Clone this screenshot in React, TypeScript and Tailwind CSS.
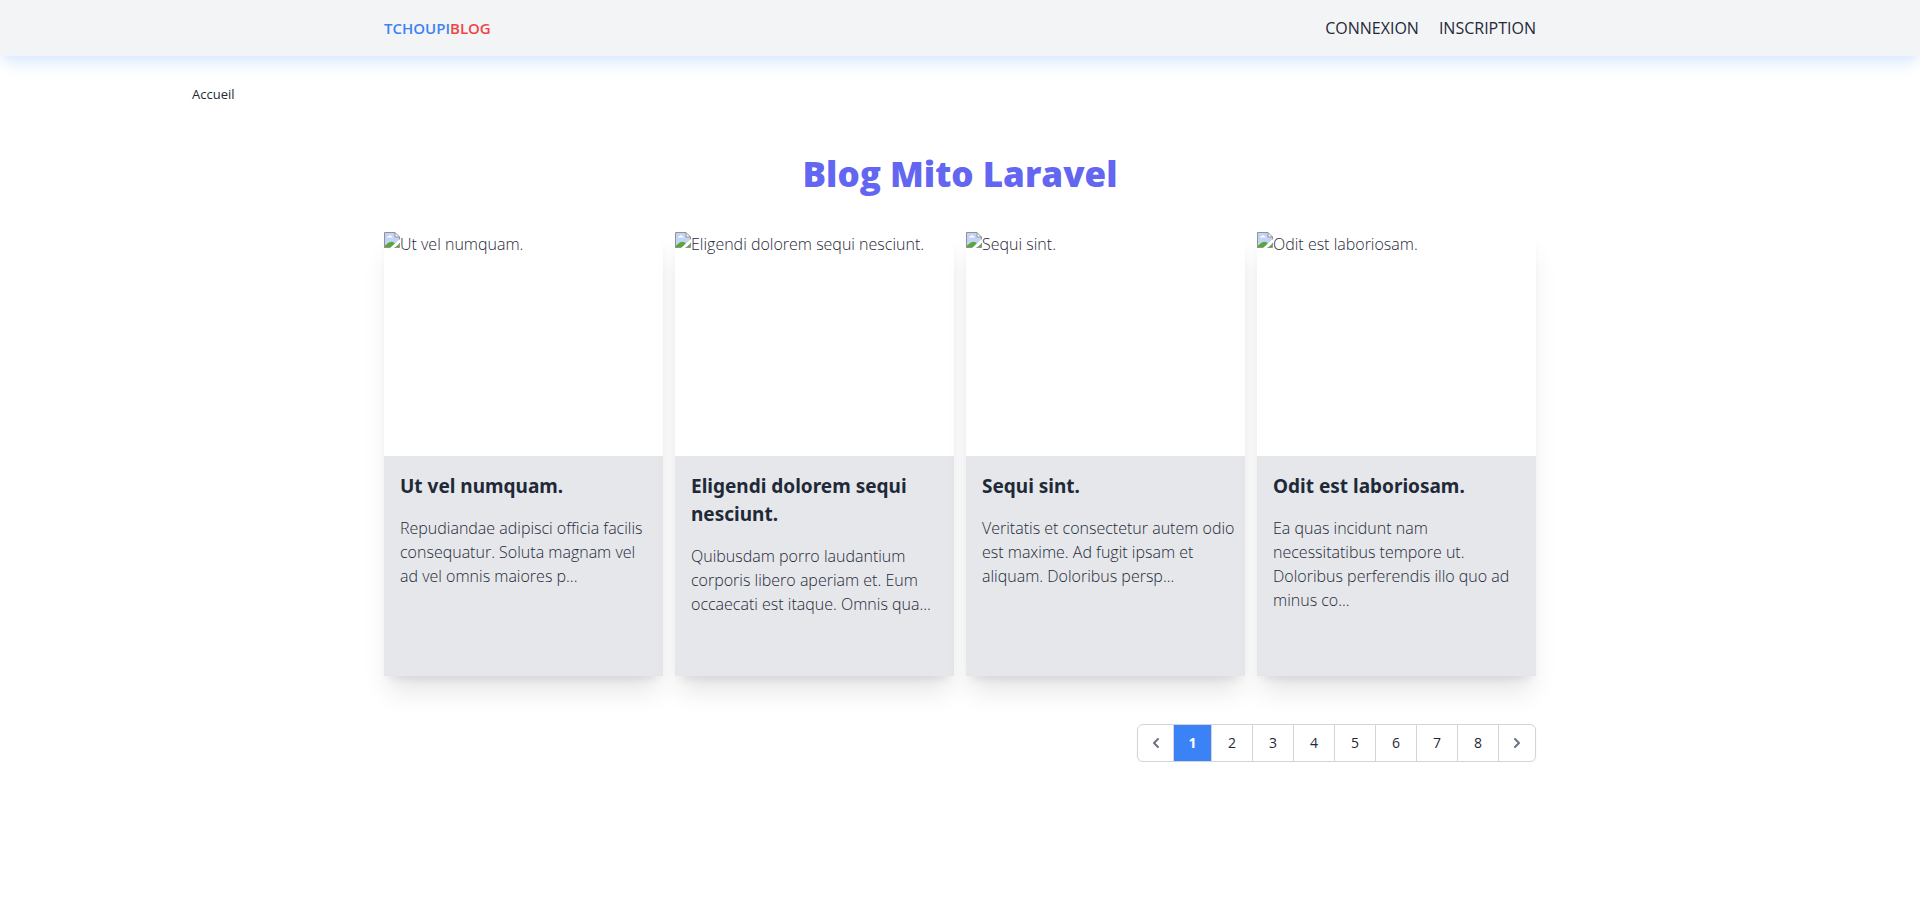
import { Fragment } from "react";

type Post = { title: string; heading: string[]; excerpt: string[] };

const posts: Post[] = [
  {
    title: "Ut vel numquam.",
    heading: ["Ut vel numquam."],
    excerpt: ["Repudiandae adipisci officia facilis", "consequatur. Soluta magnam vel", "ad vel omnis maiores p..."],
  },
  {
    title: "Eligendi dolorem sequi nesciunt.",
    heading: ["Eligendi dolorem sequi", "nesciunt."],
    excerpt: ["Quibusdam porro laudantium", "corporis libero aperiam et. Eum", "occaecati est itaque. Omnis qua..."],
  },
  {
    title: "Sequi sint.",
    heading: ["Sequi sint."],
    excerpt: ["Veritatis et consectetur autem odio", "est maxime. Ad fugit ipsam et", "aliquam. Doloribus persp..."],
  },
  {
    title: "Odit est laboriosam.",
    heading: ["Odit est laboriosam."],
    excerpt: ["Ea quas incidunt nam", "necessitatibus tempore ut.", "Doloribus perferendis illo quo ad", "minus co..."],
  },
];

const pages = [2, 3, 4, 5, 6, 7, 8];

function Lines({ items }: { items: string[] }) {
  return (
    <>
      {items.map((line, i) => (
        <Fragment key={line}>
          {i > 0 && <br />}
          {line}
        </Fragment>
      ))}
    </>
  );
}

function MissingImage() {
  return (
    <svg viewBox="0 0 16 16" className="size-4 shrink-0" aria-hidden="true">
      <path d="M0.5 0.5H11L15.5 5V7.5L7 15.5H0.5Z" fill="#c3d3f8" />
      <path d="M3 5.6C3 4.4 4 4 4.6 4.2C5 2.8 7 2.8 7.3 4.3C8.4 4.2 8.8 5 8.7 5.6Z" fill="#fff" />
      <path d="M1 15V13.5C3 12.5 4.5 9.8 7.2 9.8C9 9.8 10 10.6 10.8 11.6L7 15Z" fill="#56a934" />
      <path d="M0.5 16V0.5H11" fill="none" stroke="#929292" />
      <path d="M0 15.5H6.5" stroke="#929292" />
      <path d="M15.5 8V5L11 0.5V5H15.5" fill="#fff" stroke="#929292" />
      <path d="M16 7V10L9.5 16H6.5Z" fill="#fff" />
      <path d="M15.5 11.5V15.5H11L15.5 11.5Z" fill="#56a934" />
      <path d="M10.5 15.5H15.5V11" fill="none" stroke="#929292" />
    </svg>
  );
}

function Chevron({ d }: { d: string }) {
  return (
    <svg viewBox="0 0 20 20" fill="currentColor" className="size-5" aria-hidden="true">
      <path fillRule="evenodd" clipRule="evenodd" d={d} />
    </svg>
  );
}

export default function App() {
  return (
    <div className="bg-white font-['Open_Sans',sans-serif] text-[#1f2937]">
      <header className="bg-[#f3f4f6] shadow-[0_10px_15px_-3px_#dbeafe,0_4px_6px_-4px_#dbeafe]">
        <nav className="mx-auto flex h-14 w-3/5 items-center justify-between">
          <a href="#" className="text-[15px] font-semibold text-[#3b82f6]">
            TCHOUPI<span className="text-[#ef4444]">BLOG</span>
          </a>
          <div className="flex gap-5 text-base">
            <a href="#">CONNEXION</a>
            <a href="#">INSCRIPTION</a>
          </div>
        </nav>
      </header>

      <div className="mx-auto mt-7 w-4/5 text-[13px] leading-5">
        <a href="#">Accueil</a>
      </div>

      <main className="mx-auto w-3/5">
        <h1 className="mt-12 text-center text-[35px] leading-11 font-extrabold text-[#6366f1]">Blog Mito Laravel</h1>

        <section className="mt-9 grid grid-cols-4 gap-3">
          {posts.map((post) => (
            <a
              key={post.title}
              href="#"
              className="flex flex-col shadow-[0_20px_25px_-5px_rgb(0_0_0/0.1),0_8px_10px_-6px_rgb(0_0_0/0.1)]"
            >
              <div className="flex h-56 bg-white text-base leading-6 font-light">
                <MissingImage />
                <span>{post.title}</span>
              </div>
              <div className="min-h-[220px] flex-1 bg-[#e5e7eb] p-4 whitespace-nowrap">
                <h2 className="font-['Noto_Sans',sans-serif] text-[19px] leading-7 font-bold">
                  <Lines items={post.heading} />
                </h2>
                <p className="mt-4 text-base leading-6 font-light">
                  <Lines items={post.excerpt} />
                </p>
              </div>
            </a>
          ))}
        </section>

        <nav aria-label="Pagination" className="mt-12 flex justify-end">
          <div className="flex h-[38px] divide-x divide-[#d1d5db] overflow-hidden rounded-md border border-[#d1d5db] text-sm leading-5 shadow-xs">
            <button type="button" aria-label="Page précédente" className="flex w-9 items-center justify-center text-[#6b7280]">
              <Chevron d="M12.707 5.293a1 1 0 010 1.414L9.414 10l3.293 3.293a1 1 0 01-1.414 1.414l-4-4a1 1 0 010-1.414l4-4a1 1 0 011.414 0z" />
            </button>
            <span aria-current="page" className="flex w-[38px] items-center justify-center bg-[#3b82f6] font-bold text-white">
              1
            </span>
            {pages.map((page) => (
              <a key={page} href="#" className="flex w-[41px] items-center justify-center">
                {page}
              </a>
            ))}
            <button type="button" aria-label="Page suivante" className="flex w-9 items-center justify-center text-[#6b7280]">
              <Chevron d="M7.293 14.707a1 1 0 010-1.414L10.586 10 7.293 6.707a1 1 0 011.414-1.414l4 4a1 1 0 010 1.414l-4 4a1 1 0 01-1.414 0z" />
            </button>
          </div>
        </nav>
      </main>
    </div>
  );
}
